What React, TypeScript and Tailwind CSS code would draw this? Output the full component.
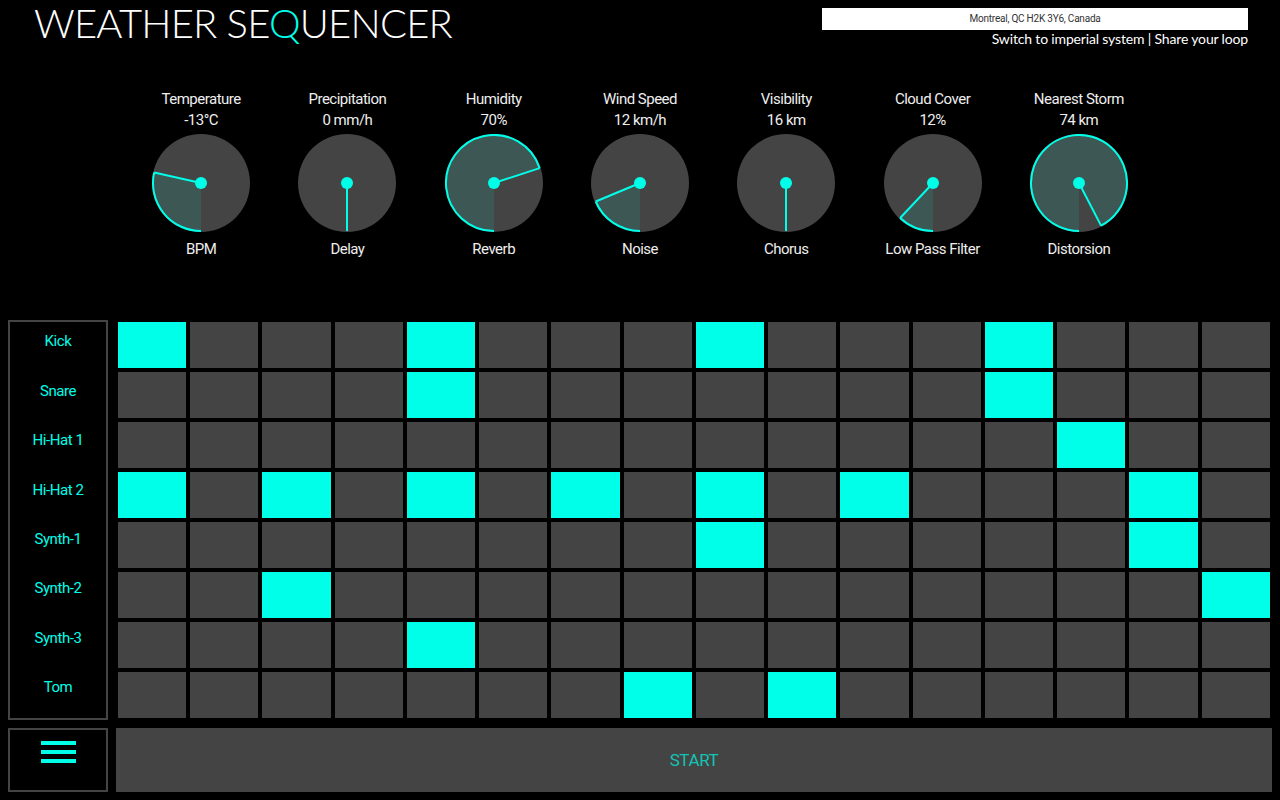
import React from "react";

const CYAN = "#00ffe9";

const dials = [
  { top: "Temperature", value: "-13°C", label: "BPM", pct: 0.285 },
  { top: "Precipitation", value: "0 mm/h", label: "Delay", pct: 0 },
  { top: "Humidity", value: "70%", label: "Reverb", pct: 0.7 },
  { top: "Wind Speed", value: "12 km/h", label: "Noise", pct: 0.187 },
  { top: "Visibility", value: "16 km", label: "Chorus", pct: 0 },
  { top: "Cloud Cover", value: "12%", label: "Low Pass Filter", pct: 0.12 },
  { top: "Nearest Storm", value: "74 km", label: "Distorsion", pct: 0.924 },
];

const tracks = ["Kick", "Snare", "Hi-Hat 1", "Hi-Hat 2", "Synth-1", "Synth-2", "Synth-3", "Tom"];

const active: number[][] = [
  [0, 4, 8, 12],
  [4, 12],
  [13],
  [0, 2, 4, 6, 8, 10, 14],
  [8, 14],
  [2, 15],
  [4],
  [7, 9],
];

function Dial({ pct }: { pct: number }) {
  const r = 48;
  const a = pct * 2 * Math.PI;
  const x = 49 - r * Math.sin(a);
  const y = 49 + r * Math.cos(a);
  const large = pct > 0.5 ? 1 : 0;
  const arc = `M49 ${49 + r} A${r} ${r} 0 ${large} 1 ${x} ${y}`;
  return (
    <svg width="98" height="98" viewBox="0 0 98 98" className="block">
      <circle cx="49" cy="49" r="49" fill="#444444" />
      {pct > 0 && <path d={`${arc} L49 49 Z`} fill={CYAN} fillOpacity="0.1" />}
      {pct > 0 && <path d={arc} fill="none" stroke={CYAN} strokeWidth="2" />}
      <line x1="49" y1="49" x2={x} y2={y} stroke={CYAN} strokeWidth="2" />
      <circle cx="49" cy="49" r="6" fill={CYAN} />
    </svg>
  );
}

export default function App() {
  return (
    <div className="w-[1280px] h-[800px] overflow-hidden bg-black text-[#eeeeee] flex flex-col font-['Roboto',sans-serif]">
      <header className="h-[70px] flex justify-between pl-[34px] pr-[32px] pt-2">
        <div className="font-['Lato',sans-serif] font-light text-[40px] leading-[31px] tracking-[-0.8px] text-white whitespace-nowrap">
          WEATHER SE<span className="text-[#00ffe9]">Q</span>UENCER
        </div>
        <div className="w-[426px] flex flex-col items-end">
          <div className="w-full h-[22px] bg-white text-[#333333] text-[10px] tracking-[-0.22px] leading-[22px] text-center">
            Montreal, QC H2K 3Y6, Canada
          </div>
          <div className="font-['Lato',sans-serif] text-[14px] tracking-[-0.16px] leading-[18px] text-white whitespace-nowrap">
            Switch to imperial system | Share your loop
          </div>
        </div>
      </header>

      <section className="w-[1024px] h-[250px] mx-auto grid grid-cols-7 pt-[19px]">
        {dials.map((d) => (
          <div key={d.top} className="flex flex-col items-center text-[15px] tracking-[-0.5px] leading-[21px]">
            <div>{d.top}</div>
            <div>{d.value}</div>
            <div className="mt-[3px] mb-[7px]">
              <Dial pct={d.pct} />
            </div>
            <div>{d.label}</div>
          </div>
        ))}
      </section>

      <section className="flex pl-2 pr-[10px] gap-[8px]">
        <div className="w-[100px] h-[400px] border-2 border-[#444444] flex flex-col pt-[1px] text-[#00ffe9] text-[15px] tracking-[-0.4px]">
          {tracks.map((t) => (
            <div key={t} className="h-[49.6px] flex items-center justify-center pb-[12px]">
              {t}
            </div>
          ))}
        </div>
        <div className="flex-1 py-[2px] pl-[1.9px] flex flex-col gap-1">
          {active.map((row, i) => (
            <div key={i} className="grid grid-cols-16 gap-1 h-[46px]">
              {Array.from({ length: 16 }).map((_, c) => (
                <div key={c} className={row.includes(c) ? "bg-[#00ffe9]" : "bg-[#444444]"} />
              ))}
            </div>
          ))}
        </div>
      </section>

      <section className="flex pl-2 pr-2 gap-2 mt-2">
        <div className="w-[100px] h-[64px] border-2 border-[#444444] flex flex-col items-center gap-[5px] pt-[11px]">
          <div className="w-[35px] h-[4px] bg-[#00ffe9]" />
          <div className="w-[35px] h-[4px] bg-[#00ffe9]" />
          <div className="w-[35px] h-[4px] bg-[#00ffe9]" />
        </div>
        <button className="flex-1 h-[64px] pt-[2px] bg-[#444444] text-[#12c4b4] text-[17px] tracking-[-0.4px]">START</button>
      </section>
    </div>
  );
}
